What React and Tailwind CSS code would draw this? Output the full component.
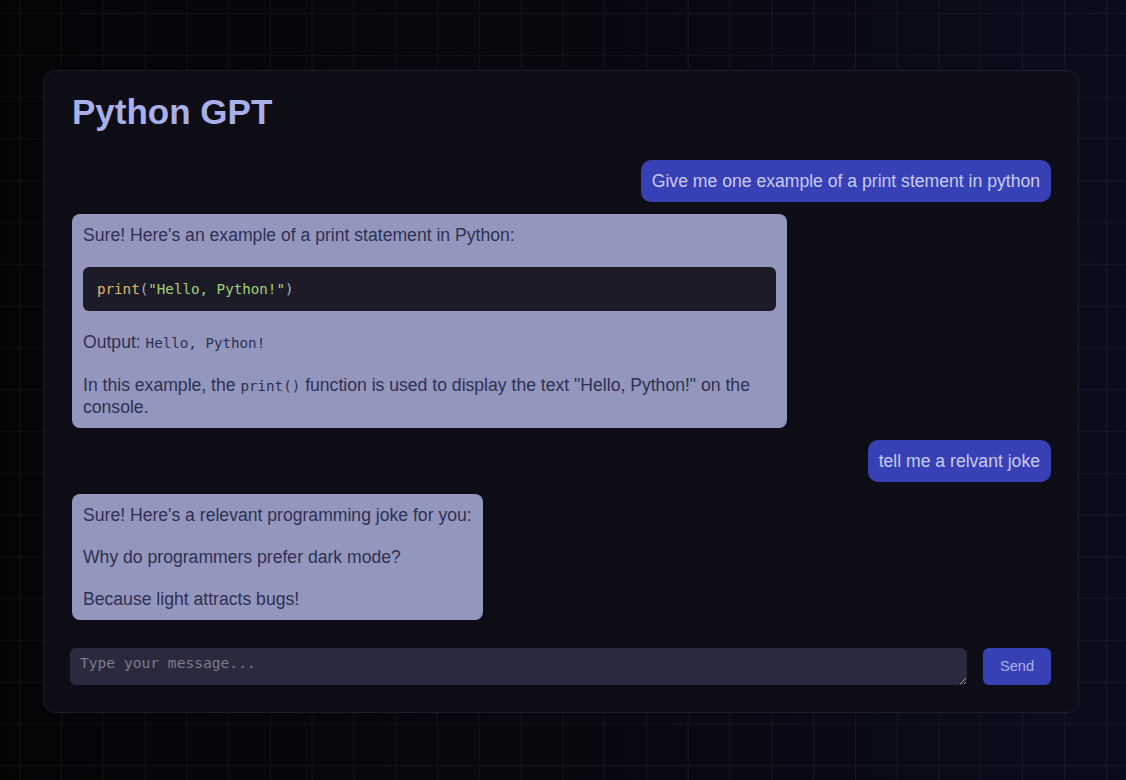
import { useState } from "react";

const messages = [
  { role: "user", text: "Give me one example of a print stement in python" },
  { role: "bot", kind: "code" },
  { role: "user", text: "tell me a relvant joke" },
  {
    role: "bot",
    text: "Sure! Here's a relevant programming joke for you:\n\nWhy do programmers prefer dark mode?\n\nBecause light attracts bugs!",
  },
];

const mono = "font-['DejaVu_Sans_Mono','Liberation_Mono',monospace]";

function CodeAnswer() {
  return (
    <div className="whitespace-pre-wrap">
      {"Sure! Here's an example of a print statement in Python:\n\n"}
      <div className={`rounded-md bg-[#1c1c28] px-[14px] py-[13px] text-[14.2px] leading-[18px] ${mono}`}>
        <span className="text-[#e5b567]">print</span>
        <span className="text-[#a9b1c9]">(</span>
        <span className="text-[#a6cf7a]">"Hello, Python!"</span>
        <span className="text-[#a9b1c9]">)</span>
      </div>
      {"\nOutput: "}
      <code className={`text-[14.2px] ${mono}`}>Hello, Python!</code>
      {"\n\nIn this example, the "}
      <code className={`text-[14.2px] ${mono}`}>print()</code>
      {' function is used to display the text "Hello, Python!" on the console.'}
    </div>
  );
}

export default function App() {
  const [draft, setDraft] = useState("");

  return (
    <div className="min-h-screen bg-[linear-gradient(90deg,#050508_0%,#08080f_50%,#0a0c1d_100%)] font-['Liberation_Sans',Arial,sans-serif]">
      <div className="min-h-screen bg-[linear-gradient(rgba(255,255,255,0.045)_1px,transparent_1px),linear-gradient(90deg,rgba(255,255,255,0.045)_1px,transparent_1px)] bg-[length:41.8px_41.8px] bg-[position:19px_13px] pl-[43px] pr-[47px] pt-[70px] pb-[66px]">
        <div className="rounded-xl border border-[#1b1b2b] bg-[#0e0e17]/95 pl-[28px] pr-[27px] pt-[21px] pb-[27px]">
          <h1 className="text-[35px] leading-[40px] font-bold text-[#a9b0e8]">Python GPT</h1>

          <div className="mt-[28px] flex flex-col gap-[12px] text-[17.6px] leading-[21px]">
            {messages.map((m, i) =>
              m.role === "user" ? (
                <div key={i} className="flex justify-end">
                  <div className="rounded-[10px] bg-[#3840b6] px-[11px] py-[10.5px] text-[#c8ccf2]">{m.text}</div>
                </div>
              ) : (
                <div key={i} className="flex justify-start">
                  <div className="max-w-[715px] rounded-[8px] bg-[#9497bd] px-[11px] py-[10.5px] text-[#2e3053]">
                    {m.kind === "code" ? <CodeAnswer /> : <div className="whitespace-pre-wrap">{m.text}</div>}
                  </div>
                </div>
              )
            )}
          </div>

          <div className="mt-[28px] flex items-stretch gap-[16px]">
            <textarea
              rows={1}
              value={draft}
              onChange={(e) => setDraft(e.target.value)}
              placeholder="Type your message..."
              className={`-ml-[2px] h-[37px] flex-1 rounded-md bg-[#2a2a3e] px-[10px] pt-[5px] text-[14.6px] leading-[20px] text-[#c8ccf2] placeholder:text-[#7c7c8c] outline-none ${mono}`}
            />
            <button className="h-[37px] w-[68px] rounded-md bg-[#3840b6] text-[14.6px] text-[#aab0ea]">Send</button>
          </div>
        </div>
      </div>
    </div>
  );
}
